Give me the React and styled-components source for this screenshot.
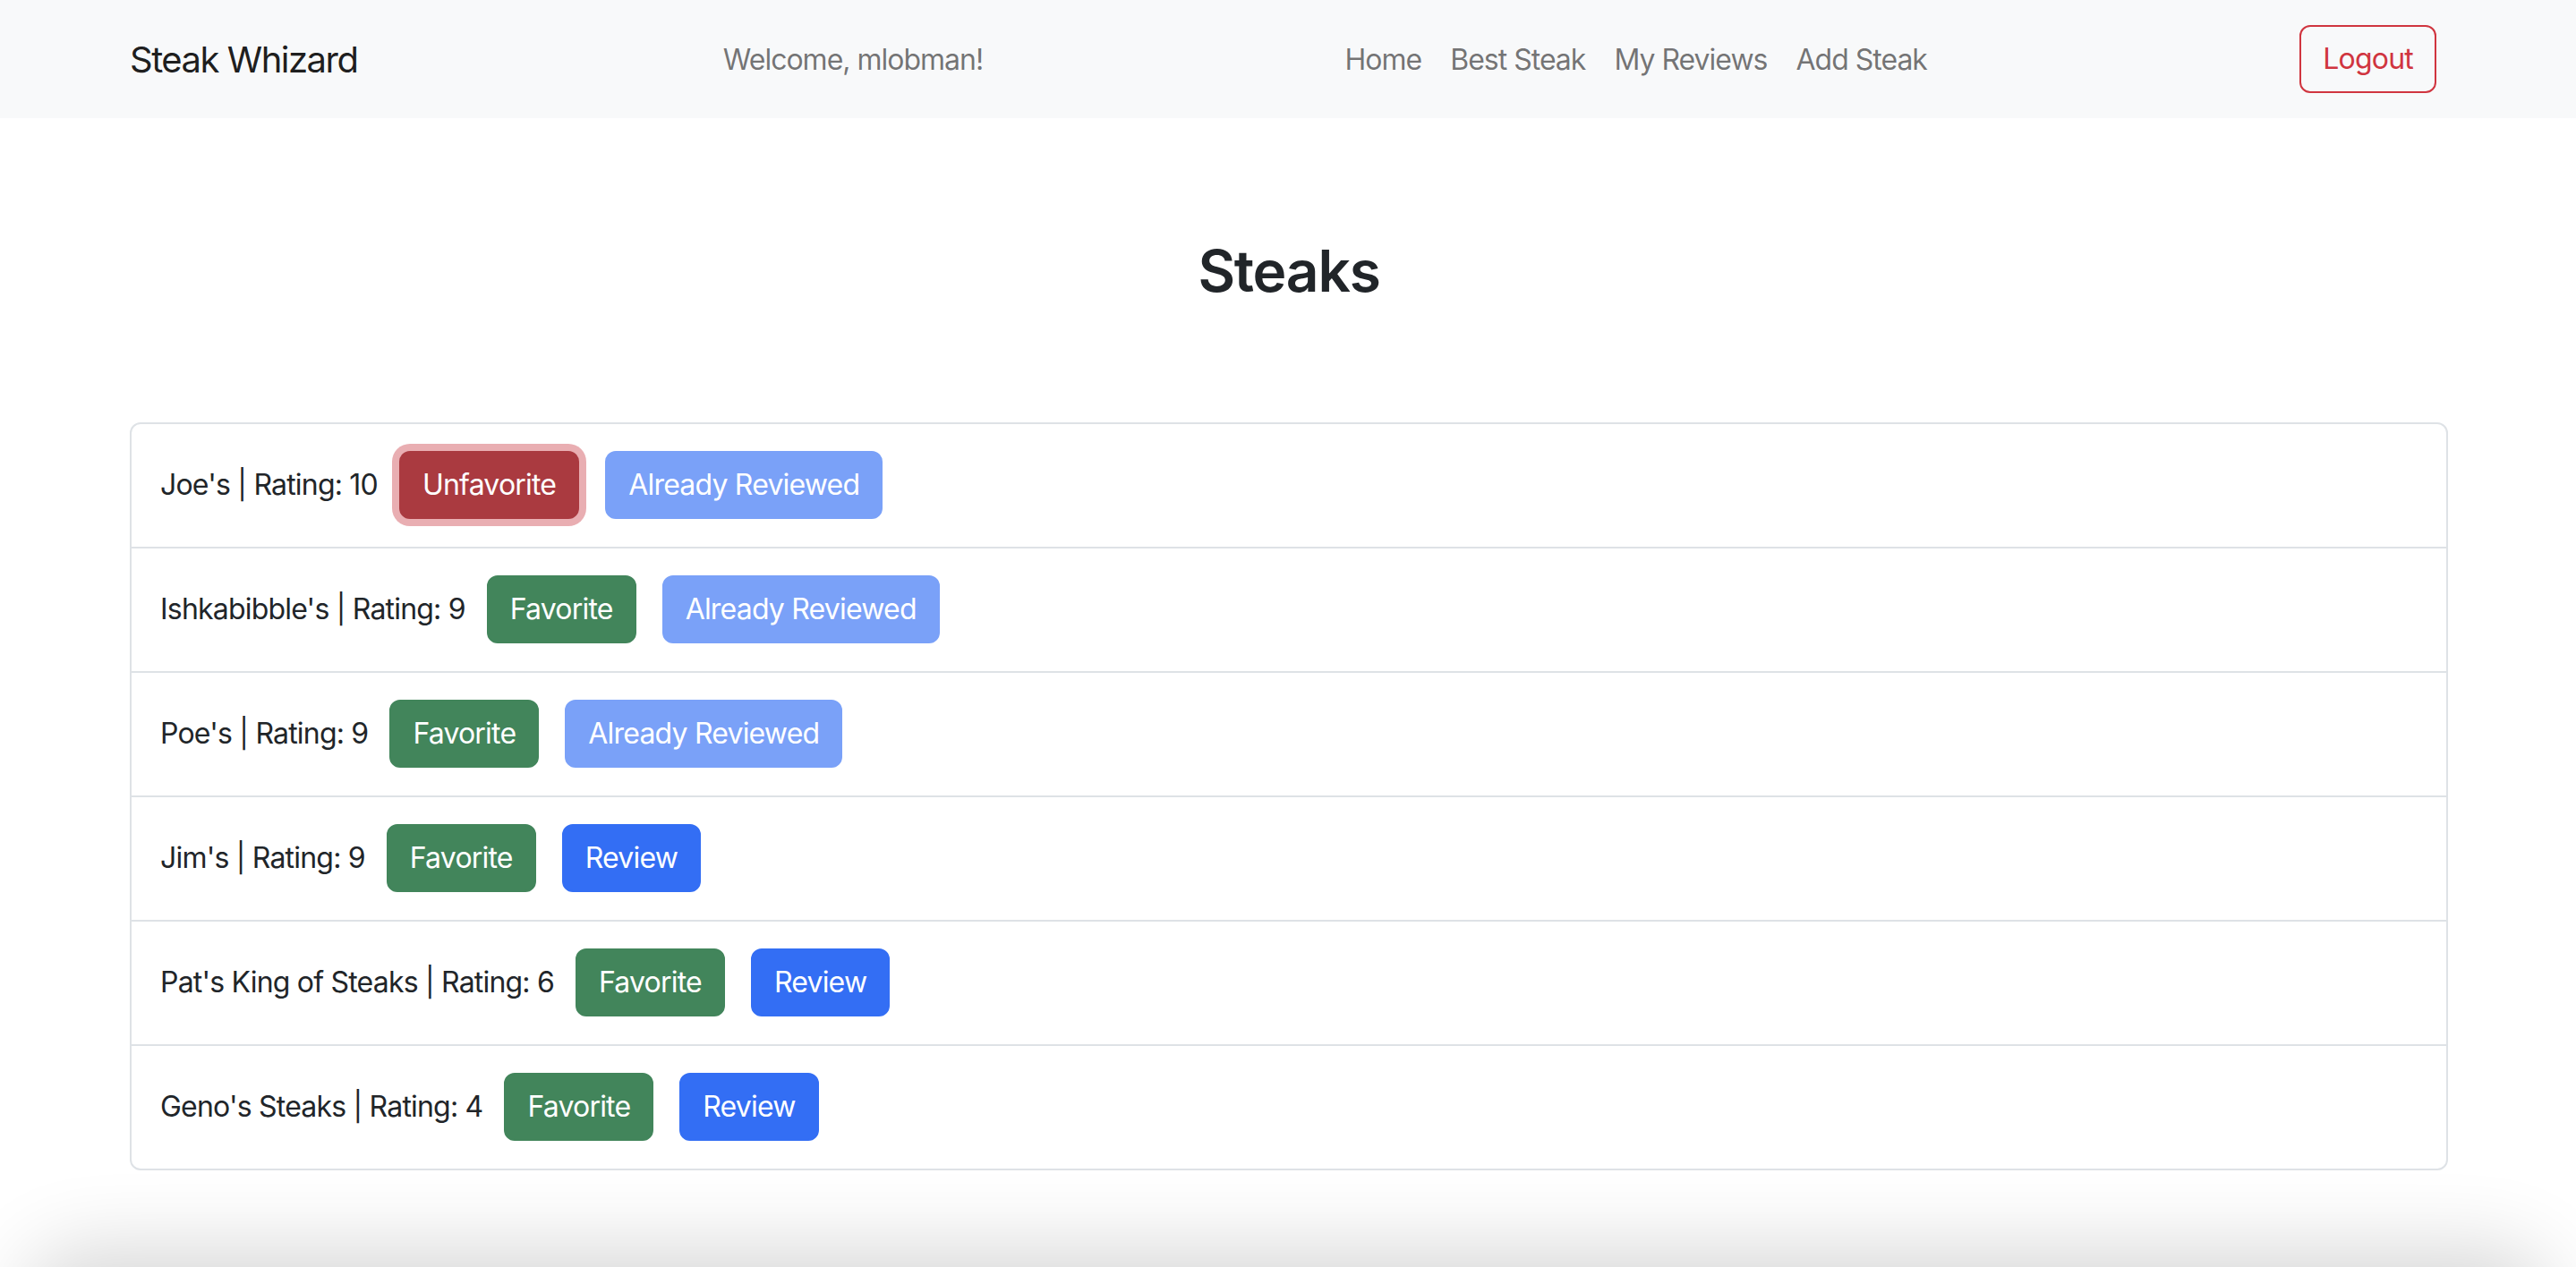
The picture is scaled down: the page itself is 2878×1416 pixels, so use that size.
import styled, { createGlobalStyle } from "styled-components";

const GlobalStyle = createGlobalStyle`
  * { box-sizing: border-box; }
  body {
    margin: 0;
    font-family: Inter, "Noto Sans", "Liberation Sans", sans-serif;
    color: #212529;
    background: #fff;
    overflow: hidden;
  }
`;

const Page = styled.div`
  display: flex;
  flex-direction: column;
`;

const NavBar = styled.nav`
  height: 132px;
  background: #f8f9fa;
  display: flex;
  align-items: center;
  justify-content: space-between;
  padding: 0 156px 0 145px;
`;

const Brand = styled.a`
  font-size: 40px;
  color: rgba(0, 0, 0, 0.9);
  letter-spacing: -1.5px;
  margin-right: 20px;
  text-decoration: none;
`;

const NavText = styled.span`
  font-size: 32px;
  color: rgba(0, 0, 0, 0.55);
  letter-spacing: -1px;
`;

const NavLinks = styled.div`
  display: flex;
  margin-right: 12px;
`;

const NavLink = styled.a`
  font-size: 32px;
  color: rgba(0, 0, 0, 0.55);
  padding: 0 16px;
  letter-spacing: -1px;
  text-decoration: none;
`;

const OutlineButton = styled.button`
  font-family: inherit;
  font-size: 32px;
  line-height: 48px;
  padding: 12px 24px;
  color: #d0353f;
  background: transparent;
  border: 2px solid #d0353f;
  border-radius: 12px;
  letter-spacing: -0.8px;
`;

const Main = styled.main`
  min-height: 1284px;
  padding: 0 143px 0 145px;
`;

const Title = styled.h2`
  margin: 133px 0 130px;
  font-size: 64px;
  font-weight: 600;
  line-height: 1.2;
  text-align: center;
  color: #212529;
  letter-spacing: -1.2px;
`;

const List = styled.ul`
  list-style: none;
  margin: 0;
  padding: 0;
  border: 2px solid #dee2e6;
  border-radius: 12px;
`;

const Row = styled.li`
  display: flex;
  align-items: center;
  gap: 29px;
  padding: 30px 32px 31px;
  border-top: ${(p) => (p.$first ? "none" : "2px solid #dee2e6")};
`;

const Label = styled.span`
  font-size: 32px;
  color: #212529;
  letter-spacing: -0.8px;
  margin-right: -5px;
`;

const colours = {
  danger: "#aa3a40",
  success: "#42855b",
  primary: "#336ef4",
  muted: "#7aa1f8",
};

const Button = styled.button`
  font-family: inherit;
  font-size: 32px;
  line-height: 48px;
  padding: 12px 24px;
  color: #fff;
  background: ${(p) => colours[p.$variant]};
  border: 2px solid ${(p) => colours[p.$variant]};
  border-radius: 12px;
  letter-spacing: -0.8px;
  box-shadow: ${(p) => (p.$focus ? "0 0 0 8px #e9aeb2" : "none")};
`;

const Footer = styled.footer`
  height: 200px;
  margin: 0 50px;
  border-radius: 40px;
  background: #fff;
  box-shadow: 0 0 90px 20px rgba(0, 0, 0, 0.16);
`;

const steaks = [
  { name: "Joe's", rating: 10, fav: true, reviewed: true },
  { name: "Ishkabibble's", rating: 9, fav: false, reviewed: true },
  { name: "Poe's", rating: 9, fav: false, reviewed: true },
  { name: "Jim's", rating: 9, fav: false, reviewed: false },
  { name: "Pat's King of Steaks", rating: 6, fav: false, reviewed: false },
  { name: "Geno's Steaks", rating: 4, fav: false, reviewed: false },
];

export default function App() {
  return (
    <Page>
      <GlobalStyle />
      <NavBar>
        <Brand>Steak Whizard</Brand>
        <NavText>Welcome, mlobman!</NavText>
        <NavLinks>
          <NavLink>Home</NavLink>
          <NavLink>Best Steak</NavLink>
          <NavLink>My Reviews</NavLink>
          <NavLink>Add Steak</NavLink>
        </NavLinks>
        <OutlineButton>Logout</OutlineButton>
      </NavBar>
      <Main>
        <Title>Steaks</Title>
        <List>
          {steaks.map((s, i) => (
            <Row key={s.name} $first={i === 0}>
              <Label>
                {s.name} | Rating: {s.rating}
              </Label>
              {s.fav ? (
                <Button $variant="danger" $focus>
                  Unfavorite
                </Button>
              ) : (
                <Button $variant="success">Favorite</Button>
              )}
              {s.reviewed ? (
                <Button $variant="muted">Already Reviewed</Button>
              ) : (
                <Button $variant="primary">Review</Button>
              )}
            </Row>
          ))}
        </List>
      </Main>
      <Footer />
    </Page>
  );
}
